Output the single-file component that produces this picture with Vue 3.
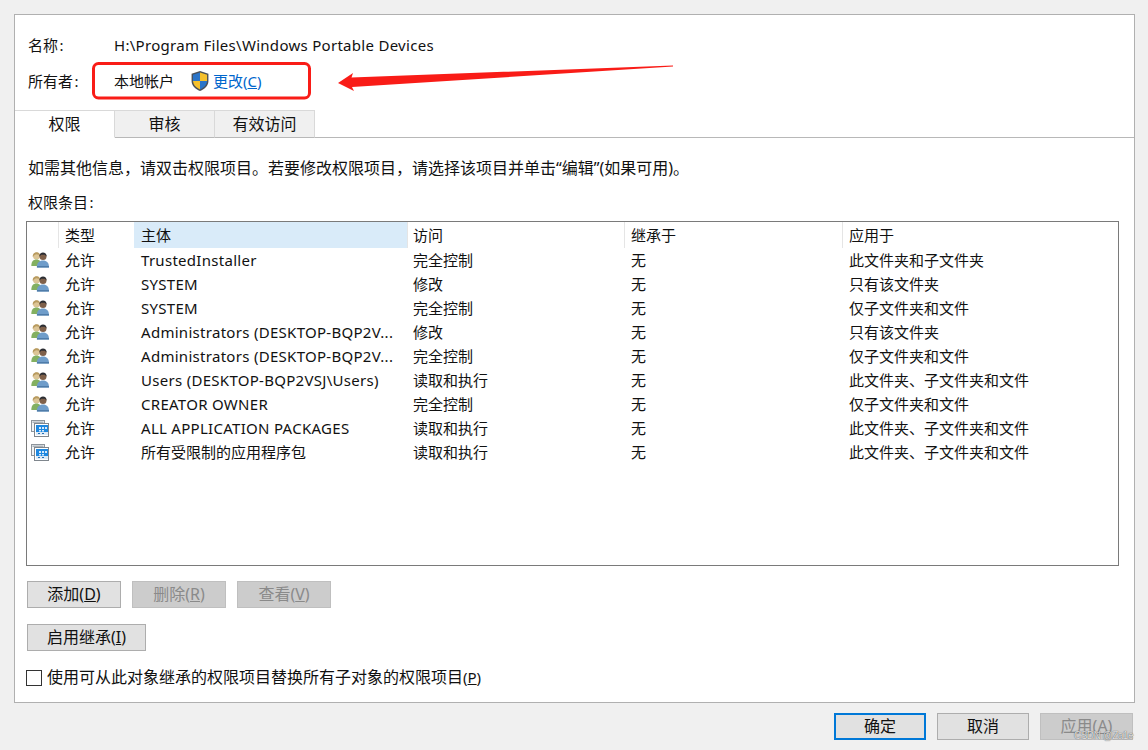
<script setup>
const columns = ['类型', '主体', '访问', '继承于', '应用于']
const rows = [
  ['user', 'TrustedInstaller', '完全控制', '此文件夹和子文件夹'],
  ['user', 'SYSTEM', '修改', '只有该文件夹'],
  ['user', 'SYSTEM', '完全控制', '仅子文件夹和文件'],
  ['user', 'Administrators (DESKTOP-BQP2V...', '修改', '只有该文件夹'],
  ['user', 'Administrators (DESKTOP-BQP2V...', '完全控制', '仅子文件夹和文件'],
  ['user', 'Users (DESKTOP-BQP2VSJ\\Users)', '读取和执行', '此文件夹、子文件夹和文件'],
  ['user', 'CREATOR OWNER', '完全控制', '仅子文件夹和文件'],
  ['app', 'ALL APPLICATION PACKAGES', '读取和执行', '此文件夹、子文件夹和文件'],
  ['app', '所有受限制的应用程序包', '读取和执行', '此文件夹、子文件夹和文件']
]
const isLatin = (text) => /[A-Za-z]/.test(text)
</script>

<template>
  <div class="page">
    <div class="panel">
      <div class="info name-row">
        <span class="label">名称<span class="colon">:</span></span>
        <span class="latin">H:\Program Files\Windows Portable Devices</span>
      </div>
      <div class="info owner-row">
        <span class="label">所有者<span class="colon">:</span></span>
        <span>本地帐户</span>
        <svg class="shield" width="18" height="20" viewBox="1 .5 16 19">
          <path d="M9 .5 1 3v7c0 4.500 3.500 7.500 8 9.500 4.500-2 8-5 8-9.500V3Z" fill="#4a5058" />
          <path d="M9 2 9 10 2.300 10V4Z" fill="#2a74c8" />
          <path d="M9 2 15.700 4V10H9Z" fill="#f5c02c" />
          <path d="M2.300 10H9V18C5 16.200 2.500 13.500 2.300 10Z" fill="#f5c02c" />
          <path d="M9 10H15.700C15.500 13.500 13 16.200 9 18Z" fill="#2a74c8" />
        </svg>
        <a class="link">更改<span>(<u>C</u>)</span></a>
      </div>

      <div class="tabs">
        <div class="tab active">权限</div>
        <div class="tab">审核</div>
        <div class="tab">有效访问</div>
        <div class="tab-rest"></div>
      </div>

      <div class="content">
        <p class="hint">如需其他信息&#xFF0C;请双击权限项目&#x3002;若要修改权限项目&#xFF0C;请选择该项目并单击“编辑”(如果可用)&#x3002;</p>
        <p class="list-title">权限条目<span class="colon">:</span></p>

        <div class="table">
          <div class="row head">
            <span class="icon-cell"></span>
            <span
              v-for="(column, index) in columns"
              :key="column"
              class="cell"
              :class="{ sorted: index === 1 }"
            >{{ column }}</span>
          </div>
          <div v-for="(row, index) in rows" :key="index" class="row">
            <span class="icon-cell">
              <svg v-if="row[0] === 'user'" width="18" height="16" viewBox="0 0 18 16">
                <circle cx="5.500" cy="4" r="3.500" fill="#dcc596" />
                <path d="M1.800 5C1.300 1.800 3.500.2 5.700.2S9.500 1.800 9 5L8 2.800 5 2.300 3 3.500Z" fill="#b89b60" />
                <path d="M.3 14C.3 9.500 2.300 7.500 5.500 7.500s4.500 2 4.500 6.500Z" fill="#83b061" />
                <circle cx="12" cy="4.500" r="3.500" fill="#7f604a" />
                <path d="M8.500 4.500C8.300 1.800 10 .4 12 .4s3.700 1.400 3.500 4.100L13.800 2.800H10.200Z" fill="#2b2d33" />
                <path d="M5.800 15.500C5.800 10.500 8.300 8.500 12 8.500s6 2 6 7Z" fill="#6f9dca" />
                <path d="M6 15.500H18V14H6Z" fill="#4f7ca9" />
              </svg>
              <svg v-else width="18" height="17" viewBox="0 0 18 17">
                <rect x=".5" y=".5" width="13" height="11" fill="#f3f4f5" stroke="#8e959c" />
                <rect x="1.500" y="1.500" width="11" height="1.500" fill="#aab2b9" />
                <rect x="3.500" y="3.500" width="14" height="13" fill="#fff" stroke="#7f868d" />
                <rect x="5" y="5" width="12" height="10" fill="#1e88e0" />
                <rect x="5" y="12" width="12" height="3" fill="#dce9f5" />
                <rect x="8" y="7" width="2" height="2" fill="#d5e9fb" />
                <rect x="11" y="7" width="2" height="2" fill="#d5e9fb" />
                <rect x="14" y="7" width="2" height="2" fill="#d5e9fb" />
                <rect x="8" y="10" width="2" height="1.500" fill="#d5e9fb" />
                <rect x="11" y="10" width="2" height="1.500" fill="#d5e9fb" />
                <rect x="7" y="13" width="2" height="1" fill="#1e6fb8" />
                <rect x="11" y="13" width="2" height="1" fill="#1e6fb8" />
              </svg>
            </span>
            <span class="cell">允许</span>
            <span class="cell" :class="{ latin: isLatin(row[1]) }">{{ row[1] }}</span>
            <span class="cell">{{ row[2] }}</span>
            <span class="cell">无</span>
            <span class="cell">{{ row[3] }}</span>
          </div>
        </div>

        <div class="actions">
          <button class="btn">添加(<u>D</u>)</button>
          <button class="btn disabled">删除(<u>R</u>)</button>
          <button class="btn disabled">查看(<u>V</u>)</button>
        </div>

        <button class="btn inherit">启用继承(<u>I</u>)</button>

        <label class="check">
          <span class="box"></span>
          <span class="check-text">使用可从此对象继承的权限项目替换所有子对象的权限项目<span class="mn">(<u>P</u>)</span></span>
        </label>
      </div>
    </div>

    <div class="footer">
      <button class="btn primary">确定</button>
      <button class="btn">取消</button>
      <button class="btn disabled">应用(<u>A</u>)</button>
    </div>

    <svg class="annotation" width="1148" height="750" viewBox="0 0 1148 750">
      <rect x="93.500" y="63.500" width="216" height="34.500" rx="5" fill="none" stroke="#f91c17" stroke-width="3" />
      <polygon points="673,65.500 351.500,77.500 353,73 338,83 354,91 352,87 673,66.500" fill="#f91c17" />
    </svg>
    <span class="watermark">CSDN @Za1e</span>
  </div>
</template>

<style>
html, body { margin: 0; background: #f0f0f0; }
</style>

<style scoped>
.page {
  position: relative;
  width: 1148px;
  height: 750px;
  overflow: hidden;
  background: #f0f0f0;
  color: #111;
  font: 15px/22px "Noto Sans", "Noto Sans CJK SC", sans-serif;
}
.panel {
  box-sizing: border-box;
  width: 1121px;
  height: 689px;
  margin: 14px 0 0 14px;
  padding-top: 19px;
  background: #fff;
  border: 1px solid #b0b0b0;
}
.info { display: flex; align-items: center; padding-left: 13px; height: 22px; }
.owner-row { margin-top: 14px; }
.label { width: 86px; }
.colon { margin-left: 1.500px; }
.latin { letter-spacing: 0.290px; }
.mn { font-size: 15px; }
.shield { margin: 0 4px 0 17px; }
.link { color: #0066cc; }
.tabs { display: flex; margin-top: 18px; height: 28px; box-sizing: border-box; font-size: 16px; }
.tab {
  box-sizing: border-box;
  width: 100px;
  height: 28px;
  text-align: center;
  line-height: 26px;
  background: #f0f0f0;
  border: 1px solid #d9d9d9;
  border-left-width: 0;
  border-bottom-color: #b8b8b8;
}
.tab.active { background: #fff; border-bottom-color: #fff; border-right-color: #d9d9d9; }
.tab-rest { flex: 1; border-bottom: 1px solid #b8b8b8; }
.content { padding: 0 15px 0 11px; }
.hint { margin: 19px 0 0 2px; font-size: 16px; }
.list-title { margin: 12px 0 0 2px; }
.table {
  box-sizing: border-box;
  height: 345px;
  margin-top: 8px;
  border: 1px solid #7a7a7a;
}
.row {
  display: grid;
  grid-template-columns: 31px 76px 273px 217px 218px 276px;
  height: 24px;
  line-height: 24px;
}
.head { height: 26px; line-height: 26px; }
.head .cell { border-left: 1px solid #e5e5e5; padding-left: 6px; }
.head .sorted { background: #d9ebf9; border-left-color: #d9ebf9; }
.cell { padding-left: 7px; white-space: nowrap; overflow: hidden; }
.row .cell:nth-child(4) { padding-left: 6px; }
.head .cell:nth-child(4) { padding-left: 5px; }
.icon-cell { display: flex; align-items: center; padding-left: 4px; }
.actions { display: flex; gap: 11px; margin: 15px 0 0 1px; }
.btn {
  box-sizing: border-box;
  width: 94px;
  height: 27px;
  padding: 0 0 2px;
  font: inherit;
  font-size: 16px;
  line-height: 22px;
  color: #111;
  background: #e1e1e1;
  border: 1px solid #adadad;
}
.btn.disabled { color: #8a8a8a; background: #cccccc; border-color: #bfbfbf; }
.inherit { display: block; width: 119px; margin: 16px 0 0 1px; }
.check { display: flex; align-items: center; gap: 5px; margin-top: 16px; height: 22px; font-size: 16px; line-height: 20px; }
.check-text { margin-top: -2px; }
.box { box-sizing: border-box; width: 16px; height: 16px; background: #fff; border: 1px solid #333; }
.footer { display: flex; justify-content: flex-end; gap: 11px; margin-top: 10px; padding-right: 15px; }
.footer .btn { width: 92px; }
.footer .btn:last-child { width: 93px; }
.primary { border: 2px solid #0078d7; }
.annotation { position: absolute; left: 0; top: 0; pointer-events: none; }
.watermark {
  position: absolute;
  right: 15px;
  top: 729px;
  font: 10px/14px "Liberation Sans", sans-serif;
  letter-spacing: -0.500px;
  color: rgba(240, 240, 240, 0.9);
  text-shadow: 0 0 1px rgba(40, 40, 40, 1);
}
</style>
